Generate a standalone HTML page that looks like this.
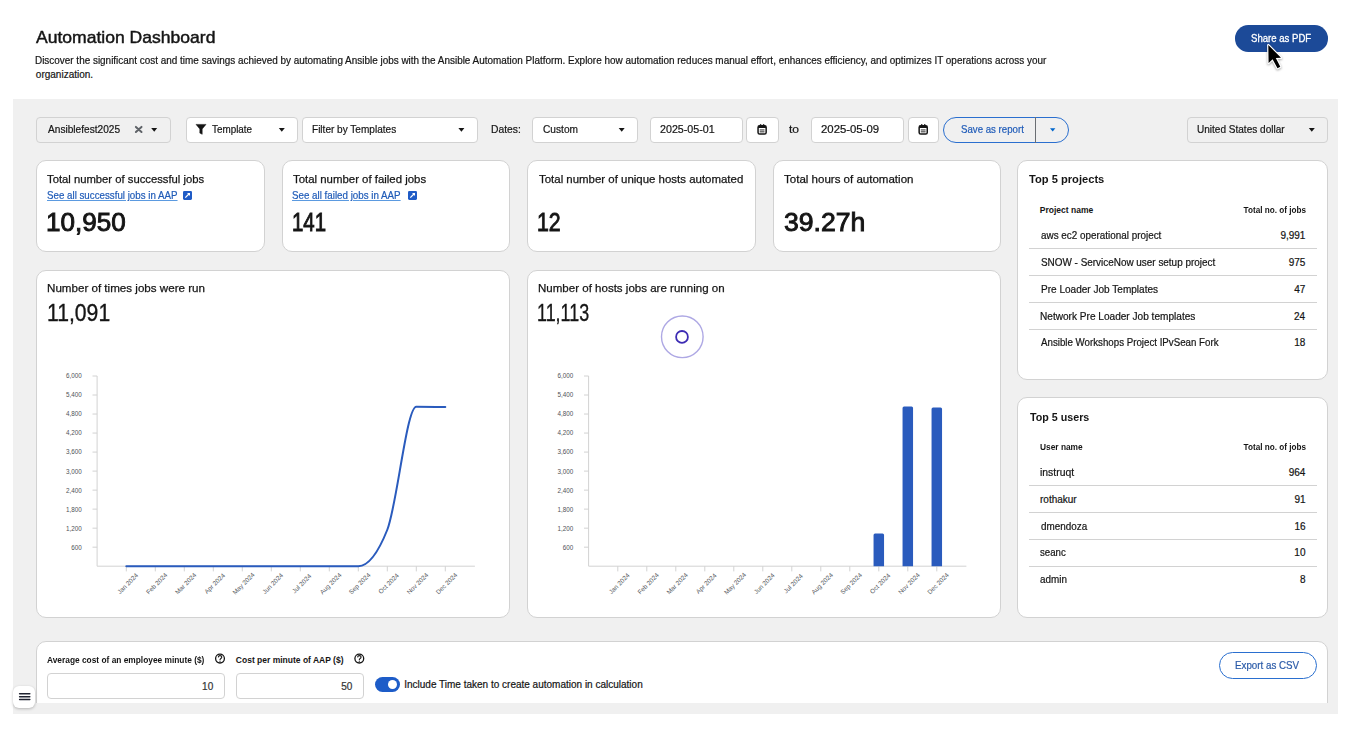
<!DOCTYPE html>
<html><head><meta charset="utf-8"><title>Automation Dashboard</title>
<style>
*{box-sizing:border-box;margin:0;padding:0}
html,body{width:1358px;height:732px;overflow:hidden;background:#fff}
body{position:relative;font-family:"Liberation Sans",sans-serif;color:#151515}
.t{position:absolute;white-space:nowrap;line-height:1}
.a{position:absolute}
.panel{position:absolute;left:13px;top:99px;width:1325px;height:615px;background:#f0f0f0}
.card{position:absolute;background:#fff;border:1px solid #d2d2d2;border-radius:10px}
.box{position:absolute;top:117px;height:26px;background:#fff;border:1px solid #d2d2d2;border-radius:4px}
.box.g{background:#f0f0f0}
svg text.yl{font-family:"Liberation Sans",sans-serif;font-size:6.3px;fill:#4f5358}
svg text.xl{font-family:"Liberation Sans",sans-serif;font-size:6.4px;fill:#55595e}
.row{position:absolute;height:1px;background:#d2d2d2}
</style></head><body>
<!-- header -->
<div class="a" style="left:1235px;top:25px;width:93px;height:26.5px;border-radius:13.25px;background:#1c4a98"></div>
<div class="panel"></div>
<!-- toolbar boxes -->
<div class="box g" style="left:36px;width:135px"></div>
<div class="box" style="left:186px;width:112px"></div>
<div class="box" style="left:302px;width:176px"></div>
<div class="box" style="left:532px;width:106px"></div>
<div class="box" style="left:650px;width:93px"></div>
<div class="box" style="left:746px;width:33px"></div>
<div class="box" style="left:811px;width:93px"></div>
<div class="box" style="left:908px;width:31px"></div>
<div class="a" style="left:943px;top:117px;width:126px;height:26px;border:1px solid #2a6fcf;border-radius:13px"></div>
<div class="a" style="left:1035px;top:117px;width:1px;height:26px;background:#6a6e73"></div>
<div class="box g" style="left:1187px;width:141px"></div>
<!-- cards -->
<div class="card" style="left:36px;top:160px;width:229px;height:92px"></div>
<div class="card" style="left:282px;top:160px;width:228px;height:92px"></div>
<div class="card" style="left:527px;top:160px;width:229px;height:92px"></div>
<div class="card" style="left:773px;top:160px;width:228px;height:92px"></div>
<div class="card" style="left:1017px;top:160px;width:311px;height:220px"></div>
<div class="card" style="left:36px;top:270px;width:474px;height:348px"></div>
<div class="card" style="left:527px;top:270px;width:474px;height:348px"></div>
<div class="card" style="left:1017px;top:397px;width:311px;height:221px"></div>
<div class="a" style="left:36px;top:641px;width:1292px;height:62px;overflow:hidden"><div class="card" style="left:0;top:0;width:1292px;height:80px"></div></div>
<!-- table rows -->
<div class="row" style="left:1029px;top:248px;width:288px"></div>
<div class="row" style="left:1029px;top:275px;width:288px"></div>
<div class="row" style="left:1029px;top:302px;width:288px"></div>
<div class="row" style="left:1029px;top:329px;width:288px"></div>
<div class="row" style="left:1029px;top:485px;width:288px"></div>
<div class="row" style="left:1029px;top:512px;width:288px"></div>
<div class="row" style="left:1029px;top:539px;width:288px"></div>
<div class="row" style="left:1029px;top:566px;width:288px"></div>
<!-- bottom inputs -->
<div class="a" style="left:47px;top:673px;width:178px;height:26px;border:1px solid #d2d2d2;border-radius:4px"></div>
<div class="a" style="left:236px;top:673px;width:128px;height:26px;border:1px solid #d2d2d2;border-radius:4px"></div>
<div class="a" style="left:375.3px;top:676.8px;width:24.8px;height:15.3px;border-radius:7.65px;background:#1d5cc8"></div>
<div class="a" style="left:387.7px;top:679.5px;width:9.2px;height:9.2px;border-radius:50%;background:#fff"></div>
<div class="a" style="left:1219px;top:652px;width:98px;height:27px;border:1px solid #2a6fcf;border-radius:14px;background:#fff"></div>
<!-- hamburger -->
<div class="a" style="left:13px;top:686px;width:22px;height:22px;background:#fff;border-radius:6px;box-shadow:0 1px 3px rgba(0,0,0,.25)"></div>
<div class="t" id="h1" style="left:36.41px;top:28.50px;font-size:17px;font-weight:400;color:#151515;transform:scaleX(1.0320);transform-origin:left center;-webkit-text-stroke:0.45px #151515;">Automation Dashboard</div>
<div class="t" id="d1" style="left:35.06px;top:55.91px;font-size:10px;font-weight:400;color:#151515;transform:scaleX(0.9927);transform-origin:left center;-webkit-text-stroke:0.2px #151515;">Discover the significant cost and time savings achieved by automating Ansible jobs with the Ansible Automation Platform. Explore how automation reduces manual effort, enhances efficiency, and optimizes IT operations across your</div>
<div class="t" id="d2" style="left:35.85px;top:70.22px;font-size:10px;font-weight:400;color:#151515;-webkit-text-stroke:0.2px #151515;">organization.</div>
<div class="t" id="sharet" style="left:1250.91px;top:32.50px;font-size:10.5px;font-weight:400;color:#ffffff;transform:scaleX(0.9130);transform-origin:left center;-webkit-text-stroke:0.3px #ffffff;">Share as PDF</div>
<div class="t" id="tb1" style="left:47.78px;top:124.11px;font-size:10.5px;font-weight:400;color:#151515;transform:scaleX(0.9637);transform-origin:left center;-webkit-text-stroke:0.2px #151515;">Ansiblefest2025</div>
<div class="t" id="tb2" style="left:211.89px;top:124.11px;font-size:10.5px;font-weight:400;color:#151515;transform:scaleX(0.9404);transform-origin:left center;-webkit-text-stroke:0.2px #151515;">Template</div>
<div class="t" id="tb3" style="left:311.66px;top:124.11px;font-size:10.5px;font-weight:400;color:#151515;transform:scaleX(0.9571);transform-origin:left center;-webkit-text-stroke:0.2px #151515;">Filter by Templates</div>
<div class="t" id="tb4" style="left:490.92px;top:124.11px;font-size:10.5px;font-weight:400;color:#151515;transform:scaleX(0.9830);transform-origin:left center;-webkit-text-stroke:0.2px #151515;">Dates:</div>
<div class="t" id="tb5" style="left:542.58px;top:124.11px;font-size:10.5px;font-weight:400;color:#151515;transform:scaleX(0.9680);transform-origin:left center;-webkit-text-stroke:0.2px #151515;">Custom</div>
<div class="t" id="tb6" style="left:659.88px;top:124.11px;font-size:10.5px;font-weight:400;color:#151515;transform:scaleX(1.0190);transform-origin:left center;-webkit-text-stroke:0.2px #151515;">2025-05-01</div>
<div class="t" id="tb7" style="left:788.98px;top:124.11px;font-size:10.5px;font-weight:400;color:#151515;transform:scaleX(1.1515);transform-origin:left center;-webkit-text-stroke:0.2px #151515;">to</div>
<div class="t" id="tb8" style="left:821.09px;top:124.11px;font-size:10.5px;font-weight:400;color:#151515;transform:scaleX(1.0817);transform-origin:left center;-webkit-text-stroke:0.2px #151515;">2025-05-09</div>
<div class="t" id="tb9" style="left:960.70px;top:124.11px;font-size:10.5px;font-weight:400;color:#1f5bb8;transform:scaleX(0.9208);transform-origin:left center;-webkit-text-stroke:0.2px #1f5bb8;">Save as report</div>
<div class="t" id="tb10" style="left:1197.46px;top:124.11px;font-size:10.5px;font-weight:400;color:#151515;transform:scaleX(0.9560);transform-origin:left center;-webkit-text-stroke:0.2px #151515;">United States dollar</div>
<div class="t" id="c1t" style="left:47.25px;top:174.20px;font-size:11.5px;font-weight:400;color:#151515;transform:scaleX(0.9793);transform-origin:left center;-webkit-text-stroke:0.25px #151515;">Total number of successful jobs</div>
<div class="t" id="c1l" style="left:46.77px;top:190.21px;font-size:10.5px;font-weight:400;color:#1f5bb8;transform:scaleX(0.9280);transform-origin:left center;text-decoration:underline;text-decoration-color:#5b9ae0;-webkit-text-stroke:0.2px #1f5bb8;">See all successful jobs in AAP</div>
<div class="t" id="c1n" style="left:46.43px;top:210.21px;font-size:25px;font-weight:400;color:#151515;transform:scaleX(1.0422);transform-origin:left center;-webkit-text-stroke:0.9px #151515;">10,950</div>
<div class="t" id="c2t" style="left:292.85px;top:174.20px;font-size:11.5px;font-weight:400;color:#151515;transform:scaleX(0.9918);transform-origin:left center;-webkit-text-stroke:0.25px #151515;">Total number of failed jobs</div>
<div class="t" id="c2l" style="left:292.27px;top:190.21px;font-size:10.5px;font-weight:400;color:#1f5bb8;transform:scaleX(0.9304);transform-origin:left center;text-decoration:underline;text-decoration-color:#5b9ae0;-webkit-text-stroke:0.2px #1f5bb8;">See all failed jobs in AAP</div>
<div class="t" id="c2n" style="left:291.88px;top:210.21px;font-size:25px;font-weight:400;color:#151515;transform:scaleX(0.8167);transform-origin:left center;-webkit-text-stroke:0.9px #151515;">141</div>
<div class="t" id="c3t" style="left:538.65px;top:174.20px;font-size:11.5px;font-weight:400;color:#151515;transform:scaleX(0.9953);transform-origin:left center;-webkit-text-stroke:0.25px #151515;">Total number of unique hosts automated</div>
<div class="t" id="c3n" style="left:537.02px;top:210.21px;font-size:25px;font-weight:400;color:#151515;transform:scaleX(0.8512);transform-origin:left center;-webkit-text-stroke:0.9px #151515;">12</div>
<div class="t" id="c4t" style="left:784.00px;top:174.20px;font-size:11.5px;font-weight:400;color:#151515;transform:scaleX(1.0025);transform-origin:left center;-webkit-text-stroke:0.25px #151515;">Total hours of automation</div>
<div class="t" id="c4n" style="left:783.53px;top:210.21px;font-size:25px;font-weight:400;color:#151515;transform:scaleX(1.0630);transform-origin:left center;-webkit-text-stroke:0.9px #151515;">39.27h</div>
<div class="t" id="g1t" style="left:46.98px;top:282.50px;font-size:11.5px;font-weight:400;color:#151515;transform:scaleX(1.0086);transform-origin:left center;-webkit-text-stroke:0.25px #151515;">Number of times jobs were run</div>
<div class="t" id="g1n" style="left:46.93px;top:301.01px;font-size:24.5px;font-weight:400;color:#151515;transform:scaleX(0.8636);transform-origin:left center;-webkit-text-stroke:0.35px #151515;">11,091</div>
<div class="t" id="g2t" style="left:538.00px;top:282.50px;font-size:11.5px;font-weight:400;color:#151515;transform:scaleX(1.0031);transform-origin:left center;-webkit-text-stroke:0.25px #151515;">Number of hosts jobs are running on</div>
<div class="t" id="g2n" style="left:537.49px;top:301.01px;font-size:24.5px;font-weight:400;color:#151515;transform:scaleX(0.7315);transform-origin:left center;-webkit-text-stroke:0.35px #151515;">11,113</div>
<div class="t" id="p0" style="left:1029.29px;top:174.11px;font-size:11px;font-weight:700;color:#151515;transform:scaleX(1.0126);transform-origin:left center;">Top 5 projects</div>
<div class="t" id="ph1" style="left:1039.83px;top:206.31px;font-size:8.5px;font-weight:700;color:#151515;">Project name</div>
<div class="t" id="ph2" style="right:52.20px;top:206.31px;font-size:8.5px;font-weight:700;color:#151515;transform:scaleX(0.9606);transform-origin:right center;">Total no. of jobs</div>
<div class="t" id="pr0" style="left:1040.87px;top:230.81px;font-size:10px;font-weight:400;color:#151515;transform:scaleX(0.9886);transform-origin:left center;-webkit-text-stroke:0.2px #151515;">aws ec2 operational project</div>
<div class="t" id="pv0" style="right:52.58px;top:230.81px;font-size:10px;font-weight:400;color:#151515;-webkit-text-stroke:0.2px #151515;">9,991</div>
<div class="t" id="pr1" style="left:1040.58px;top:257.81px;font-size:10px;font-weight:400;color:#151515;transform:scaleX(0.9918);transform-origin:left center;-webkit-text-stroke:0.2px #151515;">SNOW - ServiceNow user setup project</div>
<div class="t" id="pv1" style="right:52.64px;top:257.81px;font-size:10px;font-weight:400;color:#151515;-webkit-text-stroke:0.2px #151515;">975</div>
<div class="t" id="pr2" style="left:1040.50px;top:284.50px;font-size:10px;font-weight:400;color:#151515;transform:scaleX(1.0042);transform-origin:left center;-webkit-text-stroke:0.2px #151515;">Pre Loader Job Templates</div>
<div class="t" id="pv2" style="right:52.60px;top:284.50px;font-size:10px;font-weight:400;color:#151515;-webkit-text-stroke:0.2px #151515;">47</div>
<div class="t" id="pr3" style="left:1040.46px;top:311.50px;font-size:10px;font-weight:400;color:#151515;transform:scaleX(1.0089);transform-origin:left center;-webkit-text-stroke:0.2px #151515;">Network Pre Loader Job templates</div>
<div class="t" id="pv3" style="right:52.82px;top:311.50px;font-size:10px;font-weight:400;color:#151515;-webkit-text-stroke:0.2px #151515;">24</div>
<div class="t" id="pr4" style="left:1040.66px;top:337.91px;font-size:10px;font-weight:400;color:#151515;transform:scaleX(0.9719);transform-origin:left center;-webkit-text-stroke:0.2px #151515;">Ansible Workshops Project IPvSean Fork</div>
<div class="t" id="pv4" style="right:52.62px;top:337.91px;font-size:10px;font-weight:400;color:#151515;-webkit-text-stroke:0.2px #151515;">18</div>
<div class="t" id="u0" style="left:1029.98px;top:411.91px;font-size:11px;font-weight:700;color:#151515;transform:scaleX(0.9738);transform-origin:left center;">Top 5 users</div>
<div class="t" id="uh1" style="left:1040.06px;top:443.40px;font-size:8.5px;font-weight:700;color:#151515;transform:scaleX(0.9821);transform-origin:left center;">User name</div>
<div class="t" id="uh2" style="right:52.20px;top:443.40px;font-size:8.5px;font-weight:700;color:#151515;transform:scaleX(0.9606);transform-origin:right center;">Total no. of jobs</div>
<div class="t" id="ur0" style="left:1040.04px;top:467.81px;font-size:10px;font-weight:400;color:#151515;transform:scaleX(1.0398);transform-origin:left center;-webkit-text-stroke:0.2px #151515;">instruqt</div>
<div class="t" id="uv0" style="right:52.60px;top:467.81px;font-size:10px;font-weight:400;color:#151515;-webkit-text-stroke:0.2px #151515;">964</div>
<div class="t" id="ur1" style="left:1040.00px;top:494.61px;font-size:10px;font-weight:400;color:#151515;-webkit-text-stroke:0.2px #151515;">rothakur</div>
<div class="t" id="uv1" style="right:52.38px;top:494.61px;font-size:10px;font-weight:400;color:#151515;-webkit-text-stroke:0.2px #151515;">91</div>
<div class="t" id="ur2" style="left:1040.78px;top:521.72px;font-size:10px;font-weight:400;color:#151515;transform:scaleX(0.9883);transform-origin:left center;-webkit-text-stroke:0.2px #151515;">dmendoza</div>
<div class="t" id="uv2" style="right:52.48px;top:521.72px;font-size:10px;font-weight:400;color:#151515;-webkit-text-stroke:0.2px #151515;">16</div>
<div class="t" id="ur3" style="left:1040.32px;top:548.41px;font-size:10px;font-weight:400;color:#151515;transform:scaleX(0.9654);transform-origin:left center;-webkit-text-stroke:0.2px #151515;">seanc</div>
<div class="t" id="uv3" style="right:52.56px;top:548.41px;font-size:10px;font-weight:400;color:#151515;-webkit-text-stroke:0.2px #151515;">10</div>
<div class="t" id="ur4" style="left:1040.49px;top:575.11px;font-size:10px;font-weight:400;color:#151515;transform:scaleX(0.9871);transform-origin:left center;-webkit-text-stroke:0.2px #151515;">admin</div>
<div class="t" id="uv4" style="right:52.47px;top:575.11px;font-size:10px;font-weight:400;color:#151515;-webkit-text-stroke:0.2px #151515;">8</div>
<div class="t" id="b1" style="left:46.59px;top:656.20px;font-size:8.5px;font-weight:700;color:#151515;transform:scaleX(0.9820);transform-origin:left center;">Average cost of an employee minute ($)</div>
<div class="t" id="b2" style="left:235.84px;top:656.20px;font-size:8.5px;font-weight:700;color:#151515;">Cost per minute of AAP ($)</div>
<div class="t" id="b3" style="right:1144.80px;top:681.61px;font-size:10px;font-weight:400;color:#333333;-webkit-text-stroke:0.2px #333333;">10</div>
<div class="t" id="b4" style="right:1005.71px;top:681.61px;font-size:10px;font-weight:400;color:#333333;-webkit-text-stroke:0.2px #333333;">50</div>
<div class="t" id="b5" style="left:404.22px;top:680.00px;font-size:10px;font-weight:400;color:#151515;-webkit-text-stroke:0.2px #151515;">Include Time taken to create automation in calculation</div>
<div class="t" id="b6" style="left:1235.29px;top:659.71px;font-size:10.5px;font-weight:400;color:#2a5aa8;transform:scaleX(0.9314);transform-origin:left center;-webkit-text-stroke:0.2px #2a5aa8;">Export as CSV</div>
<svg class="a" style="left:0;top:0" width="1358" height="732" viewBox="0 0 1358 732">
<line x1="97.1" y1="376.00" x2="97.1" y2="566.2" stroke="#d2d2d2" stroke-width="1"/>
<line x1="97.1" y1="566.2" x2="474.90" y2="566.2" stroke="#d2d2d2" stroke-width="1"/>
<line x1="92.50" y1="547.18" x2="97.1" y2="547.18" stroke="#d2d2d2" stroke-width="1"/>
<text x="81.80" y="549.58" text-anchor="end" class="yl">600</text>
<line x1="92.50" y1="528.16" x2="97.1" y2="528.16" stroke="#d2d2d2" stroke-width="1"/>
<text x="81.80" y="530.56" text-anchor="end" class="yl">1,200</text>
<line x1="92.50" y1="509.14" x2="97.1" y2="509.14" stroke="#d2d2d2" stroke-width="1"/>
<text x="81.80" y="511.54" text-anchor="end" class="yl">1,800</text>
<line x1="92.50" y1="490.12" x2="97.1" y2="490.12" stroke="#d2d2d2" stroke-width="1"/>
<text x="81.80" y="492.52" text-anchor="end" class="yl">2,400</text>
<line x1="92.50" y1="471.10" x2="97.1" y2="471.10" stroke="#d2d2d2" stroke-width="1"/>
<text x="81.80" y="473.50" text-anchor="end" class="yl">3,000</text>
<line x1="92.50" y1="452.08" x2="97.1" y2="452.08" stroke="#d2d2d2" stroke-width="1"/>
<text x="81.80" y="454.48" text-anchor="end" class="yl">3,600</text>
<line x1="92.50" y1="433.06" x2="97.1" y2="433.06" stroke="#d2d2d2" stroke-width="1"/>
<text x="81.80" y="435.46" text-anchor="end" class="yl">4,200</text>
<line x1="92.50" y1="414.04" x2="97.1" y2="414.04" stroke="#d2d2d2" stroke-width="1"/>
<text x="81.80" y="416.44" text-anchor="end" class="yl">4,800</text>
<line x1="92.50" y1="395.02" x2="97.1" y2="395.02" stroke="#d2d2d2" stroke-width="1"/>
<text x="81.80" y="397.42" text-anchor="end" class="yl">5,400</text>
<line x1="92.50" y1="376.00" x2="97.1" y2="376.00" stroke="#d2d2d2" stroke-width="1"/>
<text x="81.80" y="378.40" text-anchor="end" class="yl">6,000</text>
<line x1="126.30" y1="566.2" x2="126.30" y2="571.40" stroke="#d2d2d2" stroke-width="1"/>
<text x="127.60" y="585.80" text-anchor="middle" class="xl" transform="rotate(-45 127.60 583.50)">Jan 2024</text>
<line x1="155.30" y1="566.2" x2="155.30" y2="571.40" stroke="#d2d2d2" stroke-width="1"/>
<text x="156.60" y="585.80" text-anchor="middle" class="xl" transform="rotate(-45 156.60 583.50)">Feb 2024</text>
<line x1="184.30" y1="566.2" x2="184.30" y2="571.40" stroke="#d2d2d2" stroke-width="1"/>
<text x="185.60" y="585.80" text-anchor="middle" class="xl" transform="rotate(-45 185.60 583.50)">Mar 2024</text>
<line x1="213.30" y1="566.2" x2="213.30" y2="571.40" stroke="#d2d2d2" stroke-width="1"/>
<text x="214.60" y="585.80" text-anchor="middle" class="xl" transform="rotate(-45 214.60 583.50)">Apr 2024</text>
<line x1="242.30" y1="566.2" x2="242.30" y2="571.40" stroke="#d2d2d2" stroke-width="1"/>
<text x="243.60" y="585.80" text-anchor="middle" class="xl" transform="rotate(-45 243.60 583.50)">May 2024</text>
<line x1="271.30" y1="566.2" x2="271.30" y2="571.40" stroke="#d2d2d2" stroke-width="1"/>
<text x="272.60" y="585.80" text-anchor="middle" class="xl" transform="rotate(-45 272.60 583.50)">Jun 2024</text>
<line x1="300.30" y1="566.2" x2="300.30" y2="571.40" stroke="#d2d2d2" stroke-width="1"/>
<text x="301.60" y="585.80" text-anchor="middle" class="xl" transform="rotate(-45 301.60 583.50)">Jul 2024</text>
<line x1="329.30" y1="566.2" x2="329.30" y2="571.40" stroke="#d2d2d2" stroke-width="1"/>
<text x="330.60" y="585.80" text-anchor="middle" class="xl" transform="rotate(-45 330.60 583.50)">Aug 2024</text>
<line x1="358.30" y1="566.2" x2="358.30" y2="571.40" stroke="#d2d2d2" stroke-width="1"/>
<text x="359.60" y="585.80" text-anchor="middle" class="xl" transform="rotate(-45 359.60 583.50)">Sep 2024</text>
<line x1="387.30" y1="566.2" x2="387.30" y2="571.40" stroke="#d2d2d2" stroke-width="1"/>
<text x="388.60" y="585.80" text-anchor="middle" class="xl" transform="rotate(-45 388.60 583.50)">Oct 2024</text>
<line x1="416.30" y1="566.2" x2="416.30" y2="571.40" stroke="#d2d2d2" stroke-width="1"/>
<text x="417.60" y="585.80" text-anchor="middle" class="xl" transform="rotate(-45 417.60 583.50)">Nov 2024</text>
<line x1="445.30" y1="566.2" x2="445.30" y2="571.40" stroke="#d2d2d2" stroke-width="1"/>
<text x="446.60" y="585.80" text-anchor="middle" class="xl" transform="rotate(-45 446.60 583.50)">Dec 2024</text>
<path d="M126.30,566.20C135.97,566.20,145.63,566.20,155.30,566.20C164.97,566.20,174.63,566.20,184.30,566.20C193.97,566.20,203.63,566.20,213.30,566.20C222.97,566.20,232.63,566.20,242.30,566.20C251.97,566.20,261.63,566.20,271.30,566.20C280.97,566.20,290.63,566.20,300.30,566.20C309.97,566.20,319.63,566.20,329.30,566.20C338.97,566.20,348.63,566.20,358.30,566.20C367.97,566.20,377.63,554.05,387.30,529.75C396.97,505.44,406.63,406.75,416.30,406.75C425.97,406.75,435.63,406.91,445.30,407.07" fill="none" stroke="#2a5bbd" stroke-width="2.0" stroke-linecap="round"/>
<line x1="588.6" y1="376.00" x2="588.6" y2="566.2" stroke="#d2d2d2" stroke-width="1"/>
<line x1="588.6" y1="566.2" x2="966.40" y2="566.2" stroke="#d2d2d2" stroke-width="1"/>
<line x1="584.00" y1="547.18" x2="588.6" y2="547.18" stroke="#d2d2d2" stroke-width="1"/>
<text x="573.30" y="549.58" text-anchor="end" class="yl">600</text>
<line x1="584.00" y1="528.16" x2="588.6" y2="528.16" stroke="#d2d2d2" stroke-width="1"/>
<text x="573.30" y="530.56" text-anchor="end" class="yl">1,200</text>
<line x1="584.00" y1="509.14" x2="588.6" y2="509.14" stroke="#d2d2d2" stroke-width="1"/>
<text x="573.30" y="511.54" text-anchor="end" class="yl">1,800</text>
<line x1="584.00" y1="490.12" x2="588.6" y2="490.12" stroke="#d2d2d2" stroke-width="1"/>
<text x="573.30" y="492.52" text-anchor="end" class="yl">2,400</text>
<line x1="584.00" y1="471.10" x2="588.6" y2="471.10" stroke="#d2d2d2" stroke-width="1"/>
<text x="573.30" y="473.50" text-anchor="end" class="yl">3,000</text>
<line x1="584.00" y1="452.08" x2="588.6" y2="452.08" stroke="#d2d2d2" stroke-width="1"/>
<text x="573.30" y="454.48" text-anchor="end" class="yl">3,600</text>
<line x1="584.00" y1="433.06" x2="588.6" y2="433.06" stroke="#d2d2d2" stroke-width="1"/>
<text x="573.30" y="435.46" text-anchor="end" class="yl">4,200</text>
<line x1="584.00" y1="414.04" x2="588.6" y2="414.04" stroke="#d2d2d2" stroke-width="1"/>
<text x="573.30" y="416.44" text-anchor="end" class="yl">4,800</text>
<line x1="584.00" y1="395.02" x2="588.6" y2="395.02" stroke="#d2d2d2" stroke-width="1"/>
<text x="573.30" y="397.42" text-anchor="end" class="yl">5,400</text>
<line x1="584.00" y1="376.00" x2="588.6" y2="376.00" stroke="#d2d2d2" stroke-width="1"/>
<text x="573.30" y="378.40" text-anchor="end" class="yl">6,000</text>
<line x1="617.80" y1="566.2" x2="617.80" y2="571.40" stroke="#d2d2d2" stroke-width="1"/>
<text x="619.10" y="585.80" text-anchor="middle" class="xl" transform="rotate(-45 619.10 583.50)">Jan 2024</text>
<line x1="646.80" y1="566.2" x2="646.80" y2="571.40" stroke="#d2d2d2" stroke-width="1"/>
<text x="648.10" y="585.80" text-anchor="middle" class="xl" transform="rotate(-45 648.10 583.50)">Feb 2024</text>
<line x1="675.80" y1="566.2" x2="675.80" y2="571.40" stroke="#d2d2d2" stroke-width="1"/>
<text x="677.10" y="585.80" text-anchor="middle" class="xl" transform="rotate(-45 677.10 583.50)">Mar 2024</text>
<line x1="704.80" y1="566.2" x2="704.80" y2="571.40" stroke="#d2d2d2" stroke-width="1"/>
<text x="706.10" y="585.80" text-anchor="middle" class="xl" transform="rotate(-45 706.10 583.50)">Apr 2024</text>
<line x1="733.80" y1="566.2" x2="733.80" y2="571.40" stroke="#d2d2d2" stroke-width="1"/>
<text x="735.10" y="585.80" text-anchor="middle" class="xl" transform="rotate(-45 735.10 583.50)">May 2024</text>
<line x1="762.80" y1="566.2" x2="762.80" y2="571.40" stroke="#d2d2d2" stroke-width="1"/>
<text x="764.10" y="585.80" text-anchor="middle" class="xl" transform="rotate(-45 764.10 583.50)">Jun 2024</text>
<line x1="791.80" y1="566.2" x2="791.80" y2="571.40" stroke="#d2d2d2" stroke-width="1"/>
<text x="793.10" y="585.80" text-anchor="middle" class="xl" transform="rotate(-45 793.10 583.50)">Jul 2024</text>
<line x1="820.80" y1="566.2" x2="820.80" y2="571.40" stroke="#d2d2d2" stroke-width="1"/>
<text x="822.10" y="585.80" text-anchor="middle" class="xl" transform="rotate(-45 822.10 583.50)">Aug 2024</text>
<line x1="849.80" y1="566.2" x2="849.80" y2="571.40" stroke="#d2d2d2" stroke-width="1"/>
<text x="851.10" y="585.80" text-anchor="middle" class="xl" transform="rotate(-45 851.10 583.50)">Sep 2024</text>
<line x1="878.80" y1="566.2" x2="878.80" y2="571.40" stroke="#d2d2d2" stroke-width="1"/>
<text x="880.10" y="585.80" text-anchor="middle" class="xl" transform="rotate(-45 880.10 583.50)">Oct 2024</text>
<line x1="907.80" y1="566.2" x2="907.80" y2="571.40" stroke="#d2d2d2" stroke-width="1"/>
<text x="909.10" y="585.80" text-anchor="middle" class="xl" transform="rotate(-45 909.10 583.50)">Nov 2024</text>
<line x1="936.80" y1="566.2" x2="936.80" y2="571.40" stroke="#d2d2d2" stroke-width="1"/>
<text x="938.10" y="585.80" text-anchor="middle" class="xl" transform="rotate(-45 938.10 583.50)">Dec 2024</text>
<path d="M873.55,566.2V535.05Q873.55,533.55 875.05,533.55H882.55Q884.05,533.55 884.05,535.05V566.2Z" fill="#2a5bbd"/>
<path d="M902.55,566.2V408.09Q902.55,406.59 904.05,406.59H911.55Q913.05,406.59 913.05,408.09V566.2Z" fill="#2a5bbd"/>
<path d="M931.55,566.2V409.04Q931.55,407.54 933.05,407.54H940.55Q942.05,407.54 942.05,409.04V566.2Z" fill="#2a5bbd"/>
<path d="M135.9,126.9L141.5,132.0M141.5,126.9L135.9,132.0" stroke="#5f6368" stroke-width="2.0" stroke-linecap="round"/>
<path d="M151.20,128.00H157.20L154.20,131.80Z" fill="#151515"/>
<path d="M196,124.4H206L202.2,129V134.3L199.8,133.1V129Z" fill="#151515" stroke="#151515" stroke-width="0.5" stroke-linejoin="round"/>
<path d="M278.80,128.00H284.80L281.80,131.80Z" fill="#151515"/>
<path d="M458.40,128.00H464.40L461.40,131.80Z" fill="#151515"/>
<path d="M618.70,128.00H624.70L621.70,131.80Z" fill="#151515"/>
<rect x="758.05" y="125.80" width="8.1" height="8.2" rx="1.6" fill="none" stroke="#151515" stroke-width="1.5"/><rect x="758.05" y="125.80" width="8.1" height="2.2" fill="#151515"/><rect x="759.90" y="124.20" width="1.4" height="2.4" fill="#151515"/><rect x="762.90" y="124.20" width="1.4" height="2.4" fill="#151515"/><rect x="759.70" y="129.50" width="4.8" height="0.9" fill="#151515"/><rect x="759.70" y="131.40" width="4.8" height="0.9" fill="#151515"/>
<rect x="919.15" y="125.80" width="8.1" height="8.2" rx="1.6" fill="none" stroke="#151515" stroke-width="1.5"/><rect x="919.15" y="125.80" width="8.1" height="2.2" fill="#151515"/><rect x="921.00" y="124.20" width="1.4" height="2.4" fill="#151515"/><rect x="924.00" y="124.20" width="1.4" height="2.4" fill="#151515"/><rect x="920.80" y="129.50" width="4.8" height="0.9" fill="#151515"/><rect x="920.80" y="131.40" width="4.8" height="0.9" fill="#151515"/>
<path d="M1050.00,128.20H1055.40L1052.70,131.60Z" fill="#0066cc"/>
<path d="M1308.80,128.00H1314.80L1311.80,131.80Z" fill="#151515"/>
<rect x="183.0" y="190.9" width="9" height="9" rx="1.3" fill="#1f5bc6"/><path d="M185.30,197.60L189.40,193.50" stroke="#fff" stroke-width="1.2"/><path d="M187.00,192.90H190.00V195.90Z" fill="#fff"/>
<rect x="408.0" y="190.9" width="9" height="9" rx="1.3" fill="#1f5bc6"/><path d="M410.30,197.60L414.40,193.50" stroke="#fff" stroke-width="1.2"/><path d="M412.00,192.90H415.00V195.90Z" fill="#fff"/>
<circle cx="682.3" cy="336.8" r="20.8" fill="none" stroke="#aea8e4" stroke-width="1.4"/>
<circle cx="682.0" cy="336.9" r="5.9" fill="none" stroke="#3d2cb4" stroke-width="1.8"/>
<circle cx="220.0" cy="658.6" r="4.4" fill="none" stroke="#151515" stroke-width="1.3"/><path d="M218.30,657.40Q218.40,655.60 220.00,655.60Q221.80,655.60 221.80,657.10Q221.80,658.10 220.60,658.70Q220.00,659.10 220.00,660.10" fill="none" stroke="#151515" stroke-width="1.1"/><circle cx="220.00" cy="661.20" r="0.65" fill="#151515"/>
<circle cx="359.3" cy="658.6" r="4.4" fill="none" stroke="#151515" stroke-width="1.3"/><path d="M357.60,657.40Q357.70,655.60 359.30,655.60Q361.10,655.60 361.10,657.10Q361.10,658.10 359.90,658.70Q359.30,659.10 359.30,660.10" fill="none" stroke="#151515" stroke-width="1.1"/><circle cx="359.30" cy="661.20" r="0.65" fill="#151515"/>
<line x1="19.6" y1="693.8" x2="29.8" y2="693.8" stroke="#1f2330" stroke-width="1.5" stroke-linecap="round"/>
<line x1="19.6" y1="696.8" x2="29.8" y2="696.8" stroke="#1f2330" stroke-width="1.5" stroke-linecap="round"/>
<line x1="19.6" y1="699.6" x2="29.8" y2="699.6" stroke="#1f2330" stroke-width="1.5" stroke-linecap="round"/>
<path d="M1268.3,45.0L1268.6,63.0L1272.6,59.2L1277.5,68.2L1280.3,66.7L1275.8,58.0L1281.0,57.8Z" fill="#000" stroke="#fff" stroke-width="2.4" stroke-linejoin="round" paint-order="stroke" style="filter:drop-shadow(0 1px 1px rgba(0,0,0,.35))"/>
</svg>
</body></html>
